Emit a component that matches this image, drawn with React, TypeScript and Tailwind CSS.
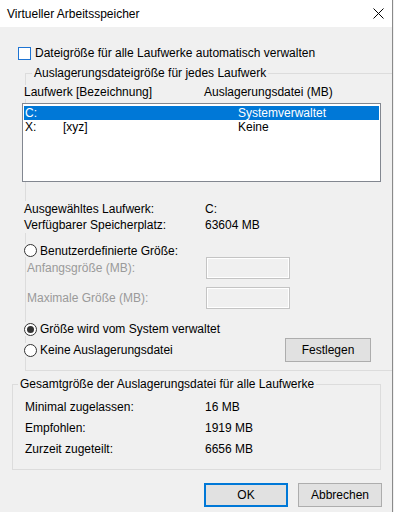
import type { ReactNode } from 'react';

function Radio({ checked }: { checked?: boolean }) {
    return (
        <span className="w-[13px] h-[13px] shrink-0 rounded-full border border-[#333333] bg-white flex items-center justify-center">
            {checked && <span className="w-[7px] h-[7px] rounded-full bg-[#333333]" />}
        </span>
    );
}

function Legend({ children, offset }: { children: ReactNode; offset: string }) {
    return (
        <div className={`-mt-[8px] ${offset} px-[2px] w-fit h-[14px] leading-[14px] bg-[#f0f0f0] whitespace-nowrap`}>
            {children}
        </div>
    );
}

function DisabledInput() {
    return <div className="w-[84px] h-[22px] border border-[#c4c4c4] bg-[#f0f0f0] shadow-[inset_0_0_0_1px_#ffffff]" />;
}

export default function App() {
    const drives = [
        { letter: 'C:', label: '', size: 'Systemverwaltet', selected: true },
        { letter: 'X:', label: '[xyz]', size: 'Keine', selected: false },
    ];

    const totals = [
        { label: 'Minimal zugelassen:', value: '16 MB' },
        { label: 'Empfohlen:', value: '1919 MB' },
        { label: 'Zurzeit zugeteilt:', value: '6656 MB' },
    ];

    return (
        <div className="w-[394px] h-[512px] bg-[#f0f0f0] flex text-[12px] text-black font-['Liberation_Sans',Arial,sans-serif]">
            <div className="w-[393px] h-full overflow-hidden flex flex-col border-r border-[#8a8a8a]">
                {/* Title bar */}
                <div className="h-[27px] shrink-0 bg-white flex items-center justify-between pl-[7px] pr-[8px]">
                    <span className="leading-[14px]">Virtueller Arbeitsspeicher</span>
                    <svg width="11" height="11" viewBox="0 0 11 11" className="text-black">
                        <path d="M0.5 0.5L10.5 10.5M10.5 0.5L0.5 10.5" stroke="currentColor" strokeWidth="1" />
                    </svg>
                </div>

                {/* Body */}
                <div className="flex-1 flex flex-col">
                    <div className="mt-[19px] ml-[18px] h-[14px] flex items-center gap-[4px] leading-[14px]">
                        <span className="w-[13px] h-[13px] border border-[#1e74d3] bg-white" />
                        <span>Dateigröße für alle Laufwerke automatisch verwalten</span>
                    </div>

                    {/* Group: per drive */}
                    <div className="mt-[13px] ml-[25px] mr-[-20px] border border-[#dcdcdc] pb-[8px]">
                        <Legend offset="ml-[6px]">Auslagerungsdateigröße für jedes Laufwerk</Legend>
                        <div className="-ml-[2px] flex flex-col">
                            <div className="mt-[5px] h-[14px] leading-[14px] flex bg-[#f0f0f0] w-[360px]">
                                <span className="w-[180px]">Laufwerk [Bezeichnung]</span>
                                <span>Auslagerungsdatei (MB)</span>
                            </div>

                            <div className="mt-[4px] -ml-[2px] w-[359px] h-[79px] border border-[#828790] bg-white pt-[2px] px-[1px]">
                                {drives.map((d) => (
                                    <div
                                        key={d.letter}
                                        className={`h-[14px] leading-[14px] flex pl-[1px] ${d.selected ? 'bg-[#0078d7] text-white' : ''}`}
                                    >
                                        <span className="w-[38px]">{d.letter}</span>
                                        <span className="w-[175px]">{d.label}</span>
                                        <span>{d.size}</span>
                                    </div>
                                ))}
                            </div>

                            <div className="mt-[19px] w-[300px] bg-[#f0f0f0]">
                                <div className="h-[16px] leading-[16px] flex">
                                    <span className="w-[181px]">Ausgewähltes Laufwerk:</span>
                                    <span>C:</span>
                                </div>
                                <div className="h-[16px] leading-[16px] flex">
                                    <span className="w-[181px]">Verfügbarer Speicherplatz:</span>
                                    <span>63604 MB</span>
                                </div>
                            </div>

                            <div className="mt-[11px] h-[13px] w-fit pr-[2px] flex items-center gap-[3px] leading-[14px] bg-[#f0f0f0]">
                                <Radio />
                                <span>Benutzerdefinierte Größe:</span>
                            </div>

                            <div className="h-[22px] flex items-center">
                                <span className="w-[182px] pl-[3px] text-[#9a9a9a]">Anfangsgröße (MB):</span>
                                <DisabledInput />
                            </div>
                            <div className="mt-[8px] h-[22px] flex items-center">
                                <span className="w-[182px] pl-[3px] text-[#9a9a9a]">Maximale Größe (MB):</span>
                                <DisabledInput />
                            </div>

                            <div className="mt-[13px] h-[14px] w-fit pr-[2px] flex items-center gap-[3px] leading-[14px] bg-[#f0f0f0]">
                                <Radio checked />
                                <span>Größe wird vom System verwaltet</span>
                            </div>

                            <div className="mt-[2px] h-[24px] flex items-center">
                                <div className="w-[261px] flex items-center">
                                    <div className="flex items-center gap-[3px] pr-[2px] leading-[14px] bg-[#f0f0f0]">
                                        <Radio />
                                        <span>Keine Auslagerungsdatei</span>
                                    </div>
                                </div>
                                <button className="w-[86px] h-[24px] bg-[#e1e1e1] border border-[#adadad] leading-[14px]">
                                    Festlegen
                                </button>
                            </div>
                        </div>
                    </div>

                    {/* Group: totals */}
                    <div className="mt-[13px] ml-[12px] w-[369px] border border-[#dcdcdc] pb-[13px]">
                        <Legend offset="ml-[5px]">Gesamtgröße der Auslagerungsdatei für alle Laufwerke</Legend>
                        <div className="mt-[9px] pl-[12px] flex flex-col gap-[7px]">
                            {totals.map((t) => (
                                <div key={t.label} className="h-[14px] leading-[14px] flex">
                                    <span className="w-[180px]">{t.label}</span>
                                    <span>{t.value}</span>
                                </div>
                            ))}
                        </div>
                    </div>

                    {/* Dialog buttons */}
                    <div className="mt-[13px] flex justify-end gap-[10px] pr-[10px]">
                        <button className="w-[84px] h-[24px] bg-[#e1e1e1] border-2 border-[#0078d7] leading-[14px]">OK</button>
                        <button className="w-[84px] h-[24px] bg-[#e1e1e1] border border-[#adadad] leading-[14px]">Abbrechen</button>
                    </div>
                </div>
            </div>
        </div>
    );
}
